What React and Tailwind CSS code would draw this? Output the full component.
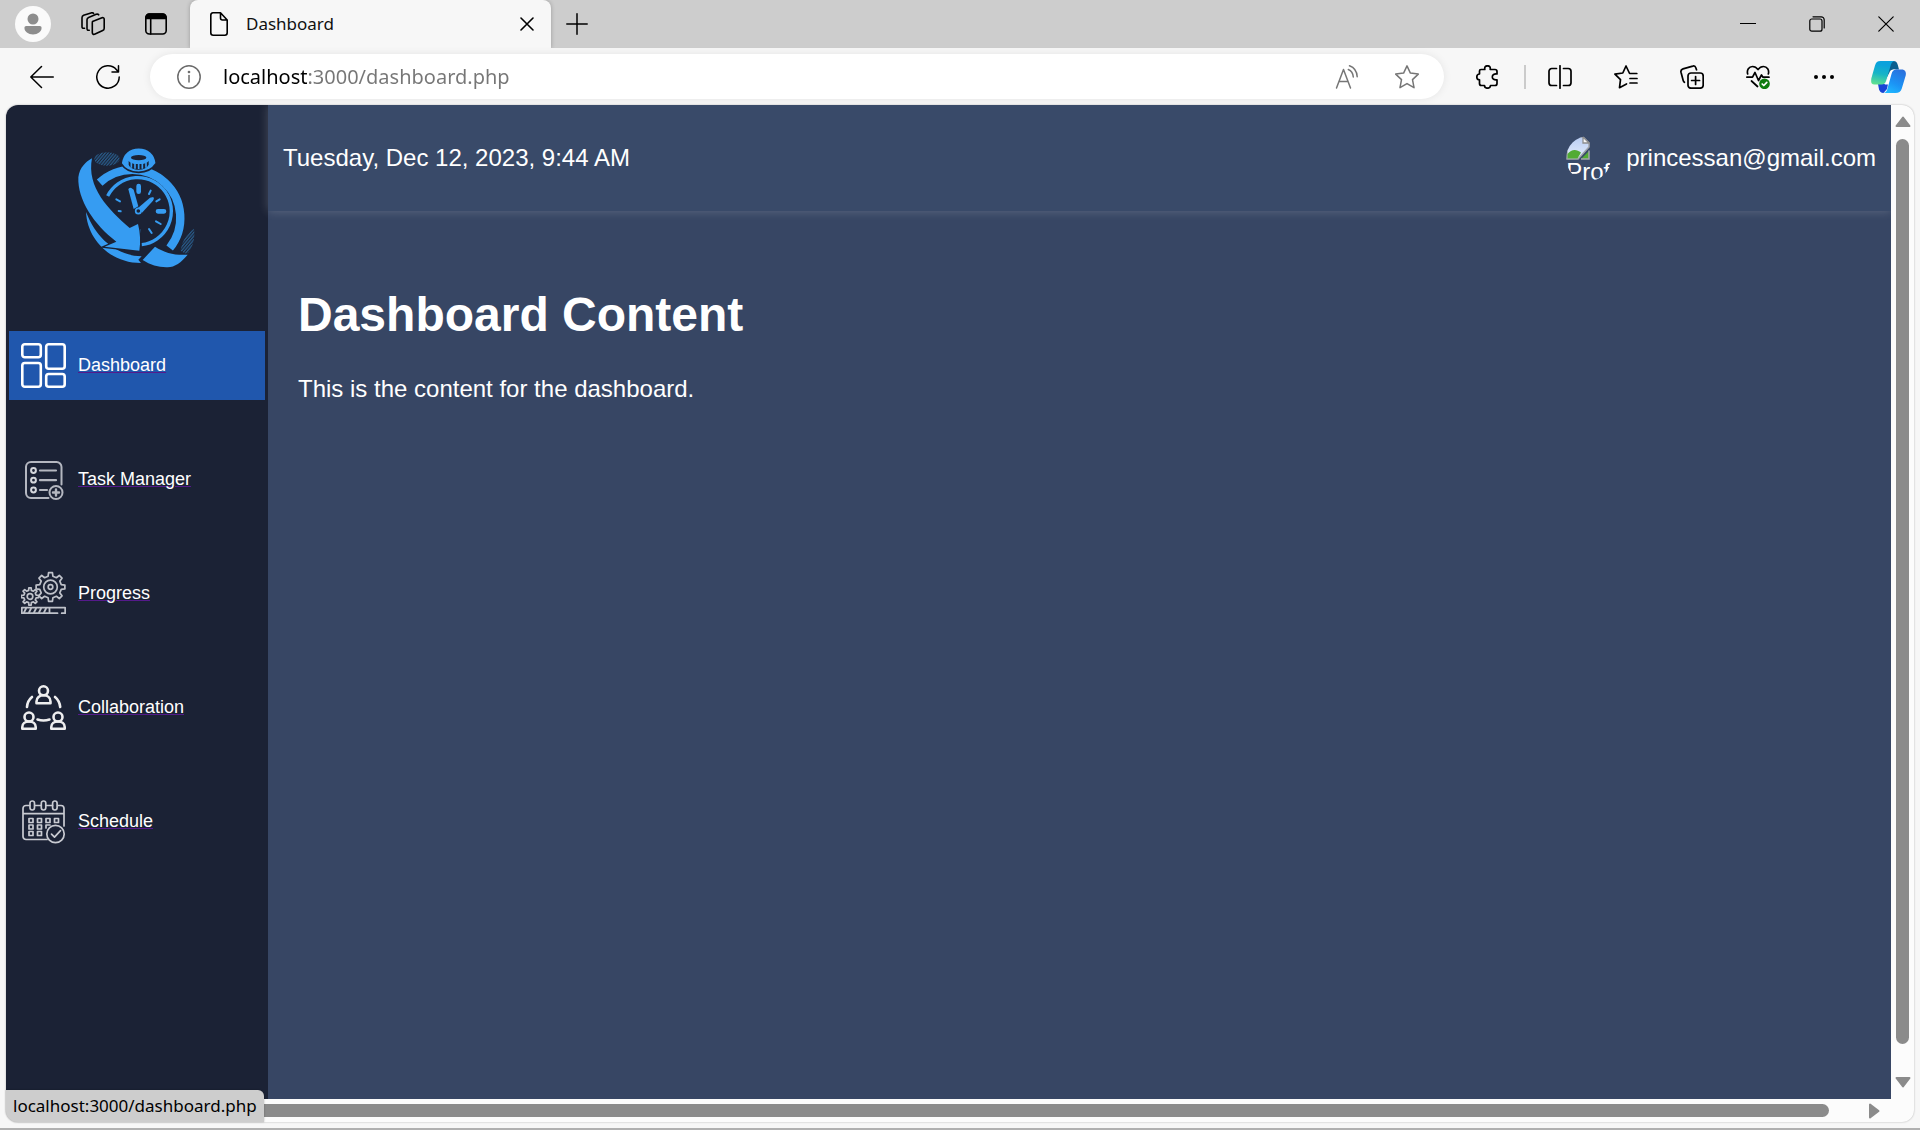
import React from "react";

const line = {
  fill: "none",
  stroke: "currentColor",
  strokeLinecap: "round",
  strokeLinejoin: "round",
};

function Icon({ size = "size-6", box = 24, width = 1.3, children }) {
  return (
    <svg className={size} viewBox={`0 0 ${box} ${box}`} strokeWidth={width} {...line} aria-hidden="true">
      {children}
    </svg>
  );
}

function ToolButton({ label, children, className = "w-[66px]" }) {
  return (
    <button type="button" aria-label={label} className={`flex h-12 shrink-0 items-center justify-center text-black ${className}`}>
      {children}
    </button>
  );
}

function TabBar() {
  return (
    <header className="flex h-12 shrink-0 bg-[#cdcdcd]">
      <button type="button" aria-label="Profile" className="mt-1.5 ml-[15px] size-9 shrink-0 rounded-full bg-[#fafafa]">
        <svg viewBox="0 0 36 36" fill="#8d8d8d" aria-hidden="true">
          <circle cx="18" cy="13" r="5.5" />
          <path d="M11.2 20h13.6a1.8 1.8 0 0 1 1.8 1.8c0 4-3.8 6.6-8.6 6.6s-8.6-2.6-8.6-6.6a1.8 1.8 0 0 1 1.8-1.8z" />
        </svg>
      </button>
      <ToolButton label="Workspaces" className="ml-[18px] w-12">
        <Icon width={1.6}>
          <path d="M11.5 9.4 21 5.8c1.2-.4 2.2.2 2.2 1.4v9c0 1.1-.5 2-1.5 2.4l-7.6 3.5c-1.6.7-2.8.1-2.8-1.5v-9.3c0-1 .1-1.6.2-1.9z" />
          <path d="M8.2 18.2c-1.5.4-2.2-.3-2.2-1.6V7.8c0-1.2.5-1.9 1.6-2.4l7.6-3.1c1.1-.4 1.9-.3 2.5.5" />
          <path d="M3.5 16.2C1.7 16.6 1 16 1 14.7V5.7c0-1.2.5-1.9 1.6-2.4L10 .9c1.2-.4 2-.2 2.6.5" />
        </Icon>
      </ToolButton>
      <ToolButton label="Tab actions" className="ml-[15px] w-12">
        <Icon width={1.6}>
          <rect x="1.8" y="2" width="20.4" height="20" rx="3.5" />
          <path d="M2 6.500V5.500A3.500 3.500 0 0 1 5.500 2h13A3.500 3.500 0 0 1 22 5.500v1z" fill="currentColor" />
          <path d="M6.7 7v15" />
        </Icon>
      </ToolButton>
      <div className="ml-2.5 flex w-[361px] shrink-0 items-center rounded-t-lg bg-[#f7f7f7] shadow-[0_0_4px_rgba(0,0,0,0.25)]">
        <svg className="ml-5 h-6 w-[18px]" viewBox="0 0 18 24" strokeWidth="1.6" {...line} aria-hidden="true">
          <path d="M3 .8h7.500L17.200 8v12.800a2.400 2.400 0 0 1-2.400 2.400H3.200A2.400 2.400 0 0 1 .8 20.800V3.200A2.400 2.400 0 0 1 3 .8zM10.500 1v5a2 2 0 0 0 2 2h4.500" />
        </svg>
        <span className="ml-[18px] grow text-[17px] text-[#111]">Dashboard</span>
        <button type="button" aria-label="Close tab" className="mr-[11px] p-1.5">
          <Icon size="size-3.5" box={14} width={1.6}>
            <path d="m1 1 12 12M13 1 1 13" />
          </Icon>
        </button>
      </div>
      <ToolButton label="New tab" className="w-[52px]">
        <Icon size="size-[22px]" box={22} width={1.5}>
          <path d="M11 .8v20.400M.8 11h20.400" />
        </Icon>
      </ToolButton>
      <div className="ml-auto flex shrink-0">
        <ToolButton label="Minimise" className="w-[69px]">
          <Icon size="size-4" box={16} width={1.2}>
            <path d="M.5 7.500h15" />
          </Icon>
        </ToolButton>
        <ToolButton label="Restore" className="w-[69px]">
          <Icon size="size-4" box={16} width={1.2}>
            <rect x=".8" y="3" width="12.2" height="12.2" rx="2" />
            <path d="M4 .8h8.200a3 3 0 0 1 3 3V12" />
          </Icon>
        </ToolButton>
        <ToolButton label="Close window" className="w-[69px]">
          <Icon size="size-4" box={16} width={1.2}>
            <path d="m.8.8 14.400 14.400M15.200.8.8 15.200" />
          </Icon>
        </ToolButton>
      </div>
    </header>
  );
}

function Copilot() {
  return (
    <svg className="size-9" viewBox="1 0 36 36" aria-hidden="true">
      <defs>
        <linearGradient id="cpLeft" x1="0.5" y1="0" x2="0.3" y2="1">
          <stop offset="0.15" stopColor="#0aa2dc" />
          <stop offset="0.55" stopColor="#17b5c6" />
          <stop offset="1" stopColor="#5fdf90" />
        </linearGradient>
        <linearGradient id="cpRight" x1="0.8" y1="0" x2="0.3" y2="1">
          <stop offset="0" stopColor="#2a6fdc" />
          <stop offset="0.6" stopColor="#1b93f5" />
          <stop offset="1" stopColor="#1fb6ff" />
        </linearGradient>
      </defs>
      <path d="M17 2h6.500c2.500 0 3.600 1.500 4.300 4l1.200 4.500h-5.500c-2 0-3.500 1-4.200 3.200L16 20z" fill="#0a5f8f" />
      <path d="M8 25h8.500L18 25l-1 5-3.500 4c-2.600 0-3.800-1.300-4.500-3.700z" fill="#1744d6" />
      <path d="M20.500 13.500c.6-2 1.700-3 3.700-3h1.500L18.500 25.500h-4c1.300-1 1.700-2 2.200-3.500z" fill="#fff" />
      <path d="M10.500 2H25c-2.800.3-3.700 2.300-4.500 5l-4.300 14.500c-.8 2.700-2 4-4.500 4H4.500C.8 25.500 1 22.800 1.300 19.500L5 6.500C6 3.400 7.300 2 10.500 2z" fill="url(#cpLeft)" />
      <path d="M25.500 34H13.500c2.500-.3 3.300-2 4-4.500L21.500 15c.8-3 2.200-4.500 4.700-4.500h5.300c3.700 0 5 2.700 4.200 6l-3.900 13c-.9 3-3 4.500-6.300 4.500z" fill="url(#cpRight)" />
    </svg>
  );
}

function Toolbar() {
  return (
    <div className="flex h-[57px] shrink-0 items-center bg-[#f7f7f7]">
      <ToolButton label="Back" className="ml-[9px] w-[66px]">
        <Icon width={1.5}>
          <path d="M23.300 12H.8M11.500 1.500.8 12l10.700 10.500" />
        </Icon>
      </ToolButton>
      <ToolButton label="Refresh">
        <Icon width={1.5}>
          <path d="M23.200 12A11.200 11.200 0 1 1 20.500 4.700L22.500 7M22.500.8V7H16" />
        </Icon>
      </ToolButton>
      <form className="mr-[9px] ml-[9px] flex h-[45px] min-w-0 grow items-center rounded-full bg-white shadow-[0_0_8px_rgba(0,0,0,0.08)]">
        <button type="button" aria-label="View site information" className="ml-[27px] shrink-0 text-[#6b6b6b]">
          <Icon width={1.5}>
            <circle cx="12" cy="12" r="11.2" />
            <path d="M12 10.500v6.500" />
            <circle cx="12" cy="7" r=".6" fill="currentColor" />
          </Icon>
        </button>
        <input
          type="text"
          aria-label="Address"
          defaultValue="localhost:3000/dashboard.php"
          className="ml-[22px] h-9 min-w-0 grow bg-[linear-gradient(to_right,#000_84px,#767676_84px)] bg-clip-text text-xl text-transparent outline-none"
        />
        <button type="button" aria-label="Read aloud" className="mr-9 shrink-0 text-[#767676]">
          <Icon width={1.5}>
            <path d="M1.500 23 8.500 4.500 15.500 23M4 16.500h9M14.500.8c4.500 1.700 7.500 6 7.700 11M13.300 4.500c3 1.200 4.700 4 5 7.500" />
          </Icon>
        </button>
        <button type="button" aria-label="Add to favourites" className="mr-[25px] shrink-0 text-[#767676]">
          <Icon width={1.5}>
            <path d="m12 .9 3.400 7.200 7.900 1-5.800 5.500 1.500 8.100-7-4.100-7 4.100 1.500-8.100L.7 9.100l7.900-1z" />
          </Icon>
        </button>
      </form>
      <ToolButton label="Extensions" className="w-[70px]">
        <Icon width={1.7}>
          <path d="M5 4.500h3.800C8.300 1.800 9.800.8 11.500.8s3.200 1 2.700 3.700H19a2 2 0 0 1 2 2V9c-2.800-.4-4.700.8-4.700 2.900s1.900 3.300 4.700 2.900v3.700a2 2 0 0 1-2 2h-4.500c-.2 2-1.500 2.700-3 2.700s-2.900-.7-3-2.700H5.500a2 2 0 0 1-2-2v-3.700C1.500 14.700.8 13.400.8 11.900S1.500 9.200 3.500 9V6c0-.9.6-1.500 1.500-1.500z" />
        </Icon>
      </ToolButton>
      <div className="mx-px h-6 w-0.5 shrink-0 bg-[#cbcbcb]" />
      <ToolButton label="Split screen">
        <Icon width={1.7}>
          <path d="M12 .8v22.400M8.500 3.500H3.800A2.800 2.800 0 0 0 1 6.300v11.400a2.800 2.800 0 0 0 2.800 2.800h4.700M15.500 3.500h4.700A2.800 2.800 0 0 1 23 6.300v11.400a2.800 2.800 0 0 1-2.800 2.800h-4.700" />
        </Icon>
      </ToolButton>
      <ToolButton label="Favourites">
        <Icon width={1.7}>
          <path d="M22.800 8.500h-7.200L12 1 8.800 8 .9 9.200l5.600 5.500-1 8 7-3.700M16 13.500h7M16 18h7" />
        </Icon>
      </ToolButton>
      <ToolButton label="Collections">
        <Icon width={1.7}>
          <rect x="8" y="8" width="15.2" height="15.2" rx="3" />
          <path d="M15.600 11.500v8M11.600 15.500h8M16.500 4.800l-.6-1.900c-.5-1.500-1.500-2.300-3.100-1.800L3 3.900C1.300 4.400.6 5.500 1 7.200l2.200 8.300c.2.800.6 1.400 1.200 1.800" />
        </Icon>
      </ToolButton>
      <ToolButton label="Browser essentials">
        <Icon width={1.7}>
          <path d="M1.700 9C.5 5 3 1.500 6.500 1.500c2.300 0 4 1 5.500 3 1.500-2 3.200-3 5.500-3C21 1.500 23.500 5 22.300 9M.8 12.200h5.700L9 7.500l3.500 8 3-5.500 1.500 2.200h6M5.500 16l6 5.500" />
          <circle cx="18.500" cy="18.8" r="4.5" fill="#107c10" stroke="#107c10" />
          <path d="m16.200 19 1.600 1.500 3-3.200" stroke="#fff" />
        </Icon>
      </ToolButton>
      <ToolButton label="Settings and more">
        <svg className="size-6" viewBox="0 0 24 24" aria-hidden="true">
          <circle cx="4" cy="12" r="2" />
          <circle cx="12" cy="12" r="2" />
          <circle cx="20" cy="12" r="2" />
        </svg>
      </ToolButton>
      <ToolButton label="Copilot" className="w-[63px]">
        <Copilot />
      </ToolButton>
    </div>
  );
}

function Logo() {
  return (
    <svg className="size-[150px]" viewBox="7 0 450 450" role="img" aria-label="Stopwatch logo">
      <defs>
        <pattern id="hatch" width="7" height="7" patternUnits="userSpaceOnUse" patternTransform="rotate(40)">
          <path d="M2 0v7" stroke="#2c6a9f" strokeWidth="3" />
        </pattern>
      </defs>
      <ellipse cx="142" cy="87" rx="38" ry="20" fill="url(#hatch)" />
      <path d="M403 296c4 28-3 56-22 78l-18-12c3-26 16-50 40-66z" fill="url(#hatch)" />
      <path d="M120 158A144 144 0 0 1 330 354" fill="none" stroke="#369cf2" strokeWidth="25" />
      <path d="M79 246c4 80 70 153 165 153l-8-10 10-10c-76-2-132-53-160-117z" fill="#369cf2" />
      <path d="M184 100c4-30 24-47 53-47s50 17 53 47c-12 18-30 27-53 27s-42-9-53-27z" fill="#369cf2" stroke="#1b2235" strokeWidth="5" />
      <path d="M207 92c3 7 14 10 30 10s27-3 30-10v12c-5 10-16 15-30 15s-26-5-30-15z" fill="#1b2235" />
      <ellipse cx="237" cy="83" rx="23" ry="8" fill="#1b2235" />
      <path d="M215 97v16M226 99v17M237 99v18M248 99v17M259 97v16" stroke="#369cf2" strokeWidth="5" />
      <path d="M144 198A101 101 0 1 1 246 344" fill="none" stroke="#369cf2" strokeWidth="10" />
      <g stroke="#369cf2" strokeLinecap="round">
        <path d="M237 168v17M295 244h18" strokeWidth="14" />
        <path d="m273 182-5 10M300 208l-10 6M170 208l11 6M177 243l6 1M289 274l14 8M268 297l8 12M240 300v10" strokeWidth="6" />
      </g>
      <path d="M206 178q2-6 9-4l7 5 14 50-14 8z" fill="#369cf2" />
      <path d="m271 203 10-2q4 5-1 11l-33 36-12-14z" fill="#369cf2" />
      <circle cx="236" cy="243" r="8" fill="#1b2235" stroke="#369cf2" strokeWidth="5" />
      <path
        d="M97 85C78 96 60 112 56 142c-3 68 48 143 114 193l-35 15 104 12c4-25 3-54-4-80l-25 12C147 240 80 172 97 85z"
        fill="#369cf2"
        stroke="#1b2235"
        strokeWidth="8"
        paintOrder="stroke"
      />
      <path d="M286 350c30 19 62 27 98 24-20 24-38 37-60 38-26 1-51-7-75-22z" fill="#369cf2" stroke="#1b2235" strokeWidth="8" paintOrder="stroke" />
    </svg>
  );
}

function gear(cx, cy, teeth, outer, inner) {
  const points = [];
  const step = (Math.PI * 2) / teeth;
  for (let i = 0; i < teeth; i++) {
    const mid = i * step - Math.PI / 2;
    [[-0.28, inner], [-0.17, outer], [0.17, outer], [0.28, inner]].forEach(([offset, radius]) => {
      const angle = mid + offset * step;
      points.push(`${(cx + Math.cos(angle) * radius).toFixed(2)} ${(cy + Math.sin(angle) * radius).toFixed(2)}`);
    });
  }
  return `M${points.join("L")}Z`;
}

const icons = {
  dashboard: (
    <Icon size="size-[45px]" box={45} width={2.6}>
      <rect x="1.3" y="1.3" width="18.5" height="13" rx="2.5" />
      <rect x="1.3" y="20" width="18.5" height="23.7" rx="2.5" />
      <rect x="25.2" y="1.3" width="18.5" height="24.5" rx="2.5" />
      <rect x="25.2" y="31" width="18.5" height="12.7" rx="2.5" />
    </Icon>
  ),
  tasks: (
    <Icon size="size-[45px]" box={45} width={2}>
      <g stroke="#b4b7c0">
        <path d="M27.500 41H10a5 5 0 0 1-5-5V10a5 5 0 0 1 5-5h25.500a5 5 0 0 1 5 5v17.500" />
        <path d="M19 13.500h16M19 23.200h16M19 33h7" strokeWidth="2.2" />
        <circle cx="35" cy="35.5" r="6.5" />
        <path d="M35 32.500v6M32 35.500h6" strokeWidth="2.4" />
      </g>
      <g stroke="#d5d7dc">
        <circle cx="12.5" cy="13.5" r="2.4" />
        <circle cx="12.5" cy="23.2" r="2.4" />
        <circle cx="12.5" cy="33" r="2.4" />
      </g>
    </Icon>
  ),
  progress: (
    <Icon size="size-[45px]" box={45} width={1.7}>
      <g stroke="#bfc2ca">
        <path d={gear(29.5, 16, 8, 14.5, 11)} />
        <circle cx="29.5" cy="16" r="6.8" />
        <circle cx="29.5" cy="16" r="2.3" />
        <path d={gear(9, 25.5, 8, 8.7, 6.3)} />
        <circle cx="9" cy="25.5" r="2.8" />
        <path d="M36.500 42.200H.8v-5.500h43.400v5.500h-3.500" strokeWidth="1.8" />
        <path d="m3 41.500 2-4M8 41.500l2-4M13 41.500l2-4M18 41.500l2-4M23 41.500l2-4M28.500 37.500v4" strokeWidth="1.8" />
      </g>
    </Icon>
  ),
  collaboration: (
    <Icon size="size-[45px]" box={45} width={2.6}>
      <g stroke="#eeeeef">
        <circle cx="22.5" cy="5.8" r="4.5" />
        <path d="M15.500 18.200v-1.700c0-3.800 3-6.200 7-6.200s7 2.400 7 6.200v1.700z" />
        <circle cx="8" cy="32" r="4.5" />
        <path d="M1.300 43.700V42c0-3.500 2.800-5.500 6.700-5.500s6.700 2 6.700 5.500v1.700z" />
        <circle cx="37" cy="32" r="4.5" />
        <path d="M30.300 43.700V42c0-3.500 2.800-5.500 6.700-5.500s6.700 2 6.700 5.500v1.700z" />
        <path d="M11 12C8 14.500 6.200 18 6 22M34 12c3 2.500 4.800 6 5.200 10M16.500 34.500c4 1.300 8 1.300 12 0" />
      </g>
    </Icon>
  ),
  schedule: (
    <Icon size="size-[45px]" box={45} width={1.7}>
      <g stroke="#c9cbd2">
        <path d="M26 40.500H5a3 3 0 0 1-3-3V9.500a3 3 0 0 1 3-3h3.500M14 6.500h6M25.500 6.500h6M37 6.500h3a3 3 0 0 1 3 3V27M2 14.700h41" />
        <rect x="9" y="2" width="4.5" height="9" rx="2.2" />
        <rect x="20.3" y="2" width="4.5" height="9" rx="2.2" />
        <rect x="31.6" y="2" width="4.5" height="9" rx="2.2" />
        <path d="M8 19.500h4v4H8zM16.500 19.500h4v4h-4zM25 19.500h4v4h-4zM33.500 19.500h4v4h-4zM8 26h4v4H8zM16.500 26h4v4h-4zM8 32.500h4v4H8zM16.500 32.500h4v4h-4zM25 29v-3h4" />
        <circle cx="34.5" cy="35" r="8.7" />
        <path d="m30.500 35.200 3 3 6-6.500" />
      </g>
    </Icon>
  ),
};

const navItems = [
  { label: "Dashboard", href: "#dashboard", icon: icons.dashboard, active: true },
  { label: "Task Manager", href: "#tasks", icon: icons.tasks },
  { label: "Progress", href: "#progress", icon: icons.progress },
  { label: "Collaboration", href: "#collaboration", icon: icons.collaboration },
  { label: "Schedule", href: "#schedule", icon: icons.schedule },
];

function Sidebar() {
  return (
    <aside className="w-[262px] shrink-0 overflow-hidden rounded-tl-xl bg-[#1b2235] px-[3px]">
      <div className="mt-[25px] flex justify-center">
        <Logo />
      </div>
      <nav className="mt-[51px] flex flex-col gap-[45px]">
        {navItems.map((item) => (
          <a
            key={item.label}
            href={item.href}
            className={`flex h-[69px] items-center gap-3 px-3 text-lg leading-5 text-white underline decoration-[#551a8b] decoration-1 underline-offset-1 ${
              item.active ? "bg-[#2057ad]" : ""
            }`}
          >
            {item.icon}
            <span className="pb-0.5">{item.label}</span>
          </a>
        ))}
      </nav>
    </aside>
  );
}

function Avatar() {
  return (
    <div className="size-[45px] overflow-hidden rounded-full">
      <svg className="size-6" viewBox="0 0 24 24" aria-hidden="true">
        <defs>
          <linearGradient id="sky" x1="0" y1="0" x2="0" y2="1">
            <stop offset="0" stopColor="#b9cdf3" />
            <stop offset="1" stopColor="#e3edfc" />
          </linearGradient>
        </defs>
        <path d="M1 1h16l6 6v4L12 23H1z" fill="url(#sky)" stroke="#a2a6ac" strokeWidth="1.5" />
        <path d="M1.500 22.500V18c4-5 9-5 13.500-1.500L11.500 22.500z" fill="#52ab34" />
        <path d="M17 1v6h6z" fill="#f6f6f6" stroke="#8f8f8f" strokeWidth="1.3" />
        <path d="M23 15v8h-8z" fill="#52ab34" />
        <path d="M23 14.500v8.500h-8" fill="none" stroke="#a2a6ac" strokeWidth="1.5" />
      </svg>
      <span className="block text-2xl leading-6">Prof</span>
    </div>
  );
}

function Page() {
  return (
    <div className="flex min-w-0 grow flex-col bg-[#374664] text-white">
      <div className="flex h-[106px] shrink-0 items-center justify-between bg-[#394a69] px-[15px] text-2xl leading-7 shadow-[0_0_10px_rgba(255,255,255,0.2)]">
        <time dateTime="2023-12-12T09:44">Tuesday, Dec 12, 2023, 9:44 AM</time>
        <div className="flex items-center gap-[15px]">
          <Avatar />
          <span>princessan@gmail.com</span>
        </div>
      </div>
      <main className="px-[30px] pt-[76px]">
        <h1 className="text-5xl leading-[56px] font-bold">Dashboard Content</h1>
        <p className="mt-8 text-2xl leading-7">This is the content for the dashboard.</p>
      </main>
    </div>
  );
}

function Arrow({ d, className }) {
  return (
    <svg className={`shrink-0 ${className}`} viewBox="0 0 16 12" fill="#8b8b8b" stroke="#8b8b8b" strokeWidth="2" strokeLinejoin="round" aria-hidden="true">
      <path d={d} />
    </svg>
  );
}

export default function App() {
  return (
    <div className="flex h-screen flex-col overflow-hidden border-b-2 border-[#b0b0b0] bg-[#f7f7f7] font-['Noto_Sans',sans-serif]">
      <TabBar />
      <Toolbar />
      <div className="relative mr-1.5 mb-1.5 ml-1.5 flex min-h-0 grow flex-col rounded-xl bg-[#fcfcfc] shadow-[0_0_2px_rgba(0,0,0,0.3)]">
        <div className="flex min-h-0 grow">
          <div className="flex min-w-0 grow font-['Liberation_Sans',Arial,sans-serif]">
            <Sidebar />
            <Page />
          </div>
          <div className="flex w-[23px] shrink-0 flex-col items-center pt-[11px] pb-[11px]">
            <Arrow className="h-3 w-4" d="M8 1.500 14.500 10h-13z" />
            <div className="mt-[11px] w-[13px] grow rounded-full bg-[#8b8b8b]" />
            <Arrow className="mt-8 h-3 w-4" d="M8 10.500 14.500 2h-13z" />
          </div>
        </div>
        <div className="flex h-[23px] shrink-0 items-center pr-8 pl-5">
          <div className="h-[13px] grow rounded-full bg-[#8b8b8b]" />
          <Arrow className="ml-[37px] h-3 w-4 -rotate-90" d="M8 10.500 14.500 2h-13z" />
        </div>
        <div className="absolute bottom-0 left-0 flex h-8 items-center rounded-tr-md rounded-bl-xl bg-[#cdcdcd] px-[7px] text-[17px] text-black shadow-[0_0_2px_rgba(0,0,0,0.3)]">
          localhost:3000/dashboard.php
        </div>
      </div>
    </div>
  );
}
